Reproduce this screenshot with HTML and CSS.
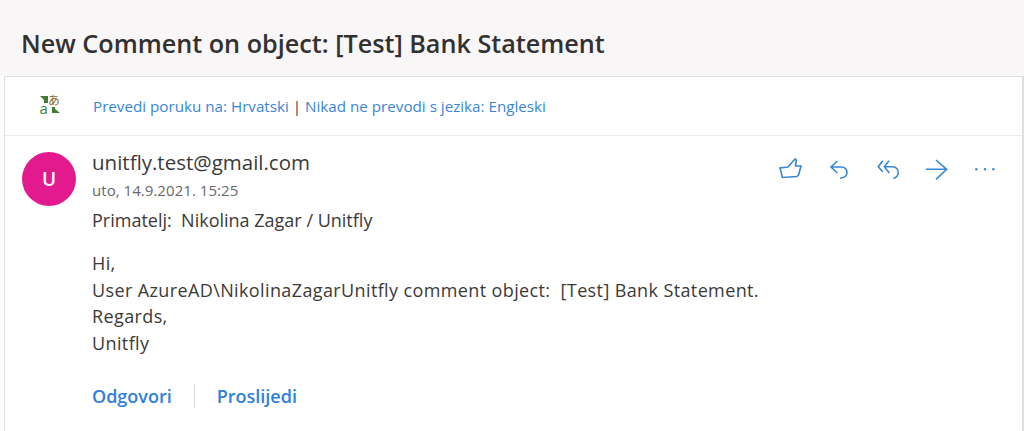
FILE: index.html
```html
<!DOCTYPE html>
<html lang="hr">
<head>
<meta charset="utf-8">
<title>New Comment on object</title>
<link rel="stylesheet" href="styles.css">
</head>
<body>
<header class="subject"><h1>New Comment on object: [Test] Bank Statement</h1></header>
<main class="card">
  <div class="translate">
    <svg class="translate-icon" width="24" height="24" viewBox="0 0 24 24">
      <path d="M2 2h8v7H6V6L2 2z" fill="#3f7d32"/>
      <path d="M22 19h-8v-6h3v2l5 4z" fill="#3f7d32"/>
      <text x="1.500" y="19.500" class="glyph-a">a</text>
      <text x="10" y="10.500" class="glyph-j">あ</text>
    </svg>
    <p class="translate-text"><a>Prevedi poruku na: Hrvatski</a> <span class="sep">|</span> <a>Nikad ne prevodi s jezika: Engleski</a></p>
  </div>
  <article class="message">
    <div class="avatar">U</div>
    <div class="content">
      <div class="top">
        <div class="meta">
          <div class="sender">unitfly.test@gmail.com</div>
          <div class="date">uto, 14.9.2021. 15:25</div>
        </div>
        <div class="actions">
          <svg width="24" height="24" viewBox="0 0 24 24" class="icon"><path d="M4.500 20.500L2 11l8-1 6-7 1.500-1 .8 1.500-.8 5.500H23l-2.500 9-1.500 1.500z"/></svg>
          <svg width="24" height="24" viewBox="0 0 24 24" class="icon"><path d="M10.300 4L4 10l6.300 6M4 10h10.700c3 0 5.300 2.500 5.300 5.500 0 3-2.500 5.300-7 5.800"/></svg>
          <svg width="24" height="24" viewBox="0 0 24 24" class="icon"><path d="M6.700 3.700L2.300 9.700l4.400 5M13 3.700L8.300 9.700l5 6.300M8.300 9.700H17c3 0 5.300 2.800 5.300 6 0 3-2.500 5.300-5 5.600"/></svg>
          <svg width="24" height="24" viewBox="0 0 24 24" class="icon"><path d="M.700 12.300h21M11 3l10.700 9.300L11 22.300"/></svg>
          <svg width="24" height="24" viewBox="0 0 24 24" class="dots"><circle cx="2.300" cy="12.300" r="1.200"/><circle cx="11" cy="12.300" r="1.200"/><circle cx="19.300" cy="12.300" r="1.200"/></svg>
        </div>
      </div>
      <div class="to">Primatelj:&nbsp; Nikolina Zagar / Unitfly</div>
      <div class="body">
        <p>Hi,</p>
        <p>User AzureAD\NikolinaZagarUnitfly comment object:&nbsp; [Test] Bank Statement.</p>
        <p>Regards,</p>
        <p>Unitfly</p>
      </div>
      <div class="replies"><a class="reply">Odgovori</a><span class="rule"></span><a class="reply">Proslijedi</a></div>
    </div>
  </article>
</main>
</body>
</html>
```
FILE: styles.css
```css
* { box-sizing: border-box; }
html, body { margin: 0; height: 100%; }
body { background: #fff; color: #3b3a39; font-family: "Open Sans", "Noto Sans", sans-serif; overflow: hidden; height: 431px; }
h1, p { margin: 0; }
.subject { height: 76px; background: #f8f6f7; padding: 25px 0 0 21px; }
.subject h1 { font-size: 25.200px; line-height: 36px; font-weight: 600; color: #323130; }
.card { margin-left: 4px; height: 355px; border: 1px solid #e1dfdd; border-right-width: 2px; border-bottom: 0; }
.translate { height: 59px; display: flex; align-items: center; padding-left: 33px; border-bottom: 1px solid #edebe9; }
.translate-icon { margin-right: 31px; flex: none; overflow: visible; }
.glyph-a { font: 15px "Open Sans", sans-serif; fill: #3f7d32; }
.glyph-j { font: 12px "Noto Sans CJK JP", sans-serif; fill: #7a6a3a; }
.translate-text { font-size: 15.200px; color: #3b3a39; }
.translate-text a { color: #3a86d6; }
.message { display: flex; padding: 16px 0 0 17px; }
.avatar { width: 54px; height: 54px; border-radius: 50%; background: #e3198e; color: #fff; font-size: 19px; font-weight: 600; display: flex; align-items: center; justify-content: center; flex: none; }
.content { flex: 1; padding-left: 16px; }
.top { display: flex; justify-content: space-between; }
.sender { font-size: 20.500px; line-height: 24px; margin-top: -2px; }
.date { font-size: 15.100px; line-height: 22px; margin-top: 5px; color: #69686a; }
.actions { display: flex; align-items: center; gap: 25px; padding: 5px 24px 0 0; align-self: flex-start; }
.icon { fill: none; stroke: #3a86d6; stroke-width: 1.600; }
.dots { fill: #3a86d6; }
.to { font-size: 18px; line-height: 24px; margin-top: 7px; }
.body { margin-top: 18px; font-size: 18px; letter-spacing: .38px; line-height: 26.500px; }
.replies { display: flex; align-items: center; margin-top: 28px; }
.reply { font-size: 18px; font-weight: 600; color: #2f80dc; }
.rule { width: 1px; height: 24px; background: #e1dfdd; margin: 0 22px; }
```
